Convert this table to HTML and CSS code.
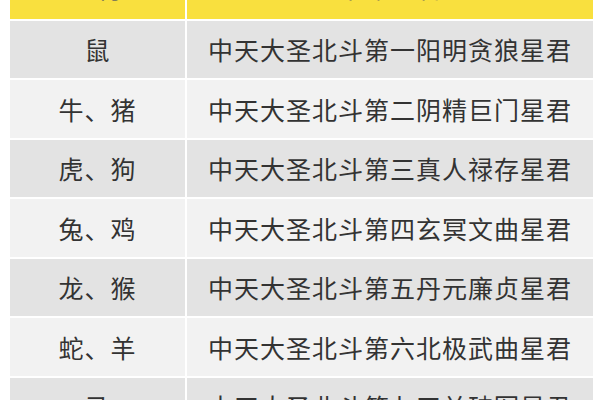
FILE: index.html
```html
<!DOCTYPE html>
<html lang="zh-CN">
<head>
<meta charset="utf-8">
<link rel="stylesheet" href="styles.css">
</head>
<body>
<div class="page">
  <div class="table">
    <div class="cell head">生肖</div>
    <div class="cell head">本命星君</div>
    <div class="cell dark">鼠</div>
    <div class="cell dark">中天大圣北斗第一阳明贪狼星君</div>
    <div class="cell light">牛、猪</div>
    <div class="cell light">中天大圣北斗第二阴精巨门星君</div>
    <div class="cell dark">虎、狗</div>
    <div class="cell dark">中天大圣北斗第三真人禄存星君</div>
    <div class="cell light">兔、鸡</div>
    <div class="cell light">中天大圣北斗第四玄冥文曲星君</div>
    <div class="cell dark">龙、猴</div>
    <div class="cell dark">中天大圣北斗第五丹元廉贞星君</div>
    <div class="cell light">蛇、羊</div>
    <div class="cell light">中天大圣北斗第六北极武曲星君</div>
    <div class="cell dark">马</div>
    <div class="cell dark">中天大圣北斗第七天关破军星君</div>
  </div>
</div>
</body>
</html>
```

FILE: styles.css
```css
html, body {
  margin: 0;
  padding: 0;
  background: #ffffff;
  overflow: hidden;
}
.page {
  width: 600px;
  height: 400px;
  overflow: hidden;
  padding-left: 10px;
  box-sizing: border-box;
}
.table {
  margin-top: -39px;
  width: 583px;
  display: grid;
  grid-template-columns: 175px 406px;
  grid-auto-rows: 57.5px;
  gap: 2px;
  font-family: "Noto Sans CJK SC", "Noto Sans", sans-serif;
  font-size: 25px;
  letter-spacing: 1px;
  color: #333333;
}
.cell {
  display: flex;
  align-items: center;
  justify-content: center;
  white-space: nowrap;
}
.head {
  background: #f9e03e;
  color: #6a6a5a;
  padding-bottom: 5px;
  box-sizing: border-box;
}
.dark {
  background: #e3e3e3;
}
.light {
  background: #f2f2f2;
}
```
